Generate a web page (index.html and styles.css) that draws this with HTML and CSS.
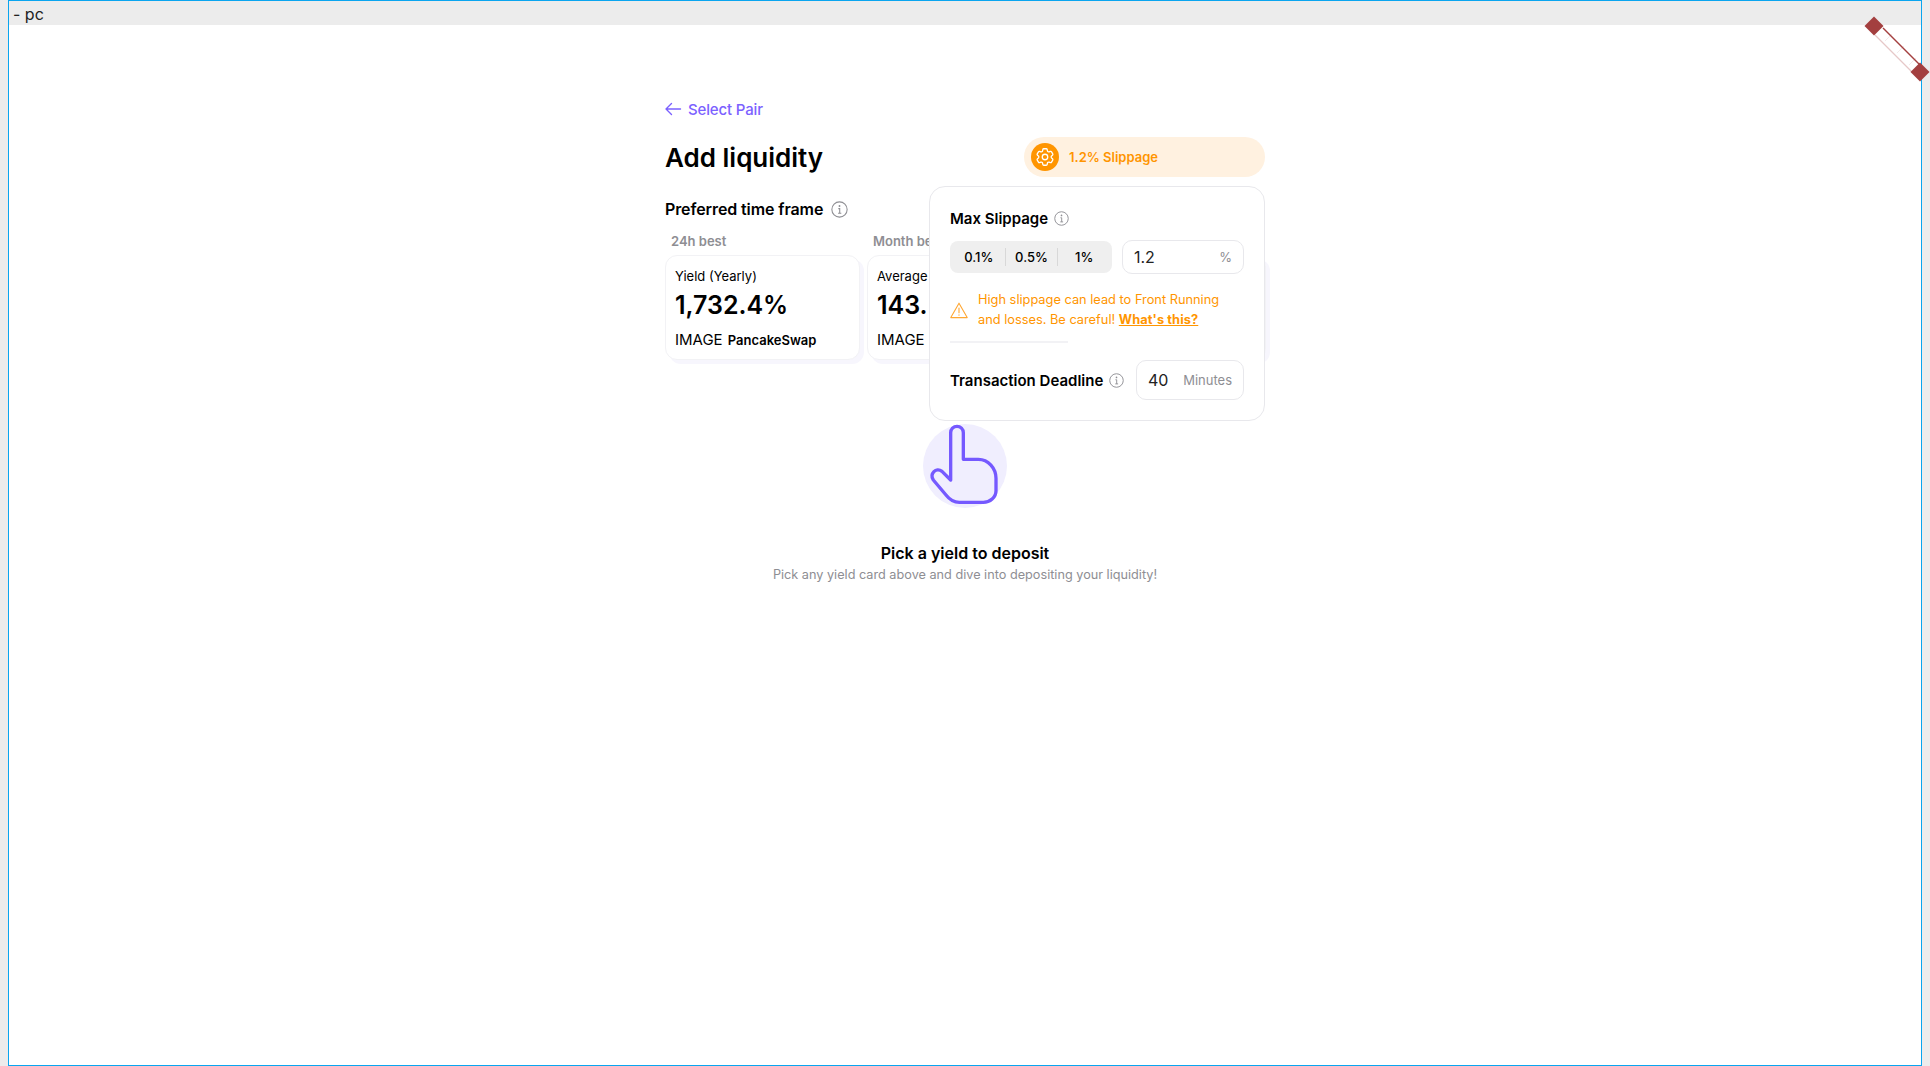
FILE: index.html
```html
<!DOCTYPE html>
<html lang="en">
<head>
    <meta charset="UTF-8">
    <title>Add liquidity - pc</title>
    <link rel="stylesheet" href="styles.css">
</head>
<body>
    <div class="frame">
        <div class="frame-title">- pc</div>

        <!-- resize handle on the frame corner -->
        <svg class="handle" width="66" height="68" viewBox="0 0 66 68">
            <path d="M19 12 L56 49 L48 56 L11 19 Z" fill="#fff"/>
            <path d="M21 25 L28 18 M33 37 L40 30 M45 49 L52 42" stroke="#f4eaea" stroke-width="1"/>
            <path d="M19 12 L56 49" stroke="#a33f3f" stroke-width="1.4"/>
            <path d="M11 19 L48 56" stroke="#e6c8c8" stroke-width="1.2"/>
            <path d="M10 0.5 L19.5 10 L10 19.5 L0.5 10 Z" fill="#a33f3f"/>
            <path d="M56 46.5 L65.5 56 L56 65.5 L46.5 56 Z" fill="#a33f3f"/>
        </svg>

        <main class="page">
            <a class="back" href="#">
                <svg width="17" height="14" viewBox="0 0 17 14" fill="none" stroke="#7b61ff" stroke-width="1.4" stroke-linecap="round" stroke-linejoin="round">
                    <path d="M15.5 7 H1 M6.5 1.5 L1 7 L6.5 12.5"/>
                </svg>
                Select Pair
            </a>

            <div class="head">
                <h1>Add liquidity</h1>
                <button class="slippage-pill">
                    <span class="gear">
                        <svg width="22" height="22" viewBox="0 0 24 24" fill="none" stroke="#fff" stroke-width="1.4" stroke-linecap="round" stroke-linejoin="round">
                            <path d="M9.594 3.94c.09-.542.56-.94 1.11-.94h2.593c.55 0 1.02.398 1.11.94l.213 1.281c.063.374.313.686.645.87.074.04.147.083.22.127.325.196.72.257 1.075.124l1.217-.456a1.125 1.125 0 0 1 1.37.49l1.296 2.247a1.125 1.125 0 0 1-.26 1.431l-1.003.827c-.293.241-.438.613-.43.992a7.723 7.723 0 0 1 0 .255c-.008.378.137.75.43.991l1.004.827c.424.35.534.955.26 1.43l-1.298 2.247a1.125 1.125 0 0 1-1.369.491l-1.217-.456c-.355-.133-.75-.072-1.076.124a6.47 6.47 0 0 1-.22.128c-.331.183-.581.495-.644.869l-.213 1.281c-.09.543-.56.94-1.11.94h-2.594c-.55 0-1.019-.398-1.11-.94l-.213-1.281c-.062-.374-.312-.686-.644-.87a6.52 6.52 0 0 1-.22-.127c-.325-.196-.72-.257-1.076-.124l-1.217.456a1.125 1.125 0 0 1-1.369-.49l-1.297-2.247a1.125 1.125 0 0 1 .26-1.431l1.004-.827c.292-.24.437-.613.43-.991a6.932 6.932 0 0 1 0-.255c.007-.38-.138-.751-.43-.992l-1.004-.827a1.125 1.125 0 0 1-.26-1.43l1.297-2.247a1.125 1.125 0 0 1 1.37-.491l1.216.456c.356.133.751.072 1.076-.124.072-.044.146-.086.22-.128.332-.183.582-.495.644-.869l.214-1.28Z"/>
                            <circle cx="12" cy="12" r="3"/>
                        </svg>
                    </span>
                    1.2% Slippage
                </button>
            </div>

            <div class="frame-label">
                Preferred time frame
                <svg class="info info-big" viewBox="0 0 16 16"><circle cx="8" cy="8" r="7.2"/><path d="M6.9 7.2 H8.2 V11.6 M6.7 11.6 H9.7"/><circle class="dot" cx="8" cy="4.7" r="0.9"/></svg>
            </div>

            <div class="cards">
                <div class="card-col">
                    <div class="card-tag">24h best</div>
                    <div class="card">
                        <div class="card-sub">Yield (Yearly)</div>
                        <div class="card-num">1,732.4%</div>
                        <div class="card-src">IMAGE <b>PancakeSwap</b></div>
                    </div>
                </div>
                <div class="card-col">
                    <div class="card-tag">Month be</div>
                    <div class="card">
                        <div class="card-sub">Average</div>
                        <div class="card-num">143.</div>
                        <div class="card-src">IMAGE</div>
                    </div>
                </div>
                <div class="card-col">
                    <div class="card-tag"></div>
                    <div class="card"></div>
                </div>
            </div>

            <div class="pick">
                <svg class="hand" width="84" height="84" viewBox="9 12 252 252">
                    <circle cx="135" cy="138" r="126" fill="#f0eefe"/>
                    <path d="M92 180 V38 a19 19 0 0 1 38 0 V118 H175 C205 118 228 145 228 175 V212 C228 232 210 247 190 247 H118 C100 247 88 238 78 225 L40 180 C28 162 48 140 66 154 Z" fill="none" stroke="#7559ff" stroke-width="10" stroke-linejoin="round"/>
                </svg>
                <h2>Pick a yield to deposit</h2>
                <p>Pick any yield card above and dive into depositing your liquidity!</p>
            </div>

            <!-- slippage popover, open over the cards -->
            <div class="popover">
                <div class="pop-title">
                    Max Slippage
                    <svg class="info" viewBox="0 0 16 16"><circle cx="8" cy="8" r="7.2"/><path d="M6.9 7.2 H8.2 V11.6 M6.7 11.6 H9.7"/><circle class="dot" cx="8" cy="4.7" r="0.9"/></svg>
                </div>
                <div class="slip-row">
                    <div class="segments">
                        <span>0.1%</span>
                        <span>0.5%</span>
                        <span>1%</span>
                    </div>
                    <div class="field slip-field">
                        <span class="field-val">1.2</span>
                        <span class="field-unit">%</span>
                    </div>
                </div>
                <div class="warning">
                    <svg width="18" height="17" viewBox="0 0 18 17" fill="none" stroke="#ffa733" stroke-width="1.1" stroke-linejoin="round" stroke-linecap="round">
                        <path d="M9 1.2 L17.2 15.6 H0.8 Z"/>
                        <path d="M9 6 V10.8 M9 12.8 V13.2"/>
                    </svg>
                    <p>High slippage can lead to Front Running and losses. Be careful! <a href="#">What's this?</a></p>
                </div>
                <div class="pop-line"></div>
                <div class="deadline">
                    <div class="pop-title">
                        Transaction Deadline
                        <svg class="info" viewBox="0 0 16 16"><circle cx="8" cy="8" r="7.2"/><path d="M6.9 7.2 H8.2 V11.6 M6.7 11.6 H9.7"/><circle class="dot" cx="8" cy="4.7" r="0.9"/></svg>
                    </div>
                    <div class="field deadline-field">
                        <span class="field-val">40</span>
                        <span class="field-unit">Minutes</span>
                    </div>
                </div>
            </div>
        </main>
    </div>
</body>
</html>
```

FILE: styles.css
```css
*{
    box-sizing: border-box;
}
html,body{
    height: 100%;
    margin: 0;
    overflow: hidden;
}
body{
    padding: 0 8px;
    background-color: #ececec;
    font-family: "Inter", "Liberation Sans", sans-serif;
    color: #000;
}
.frame{
    position: relative;
    height: 1066px;
    border: 1px solid #0aa5ef;
    background-color: #fff;
}
.frame-title{
    height: 24px;
    padding-left: 4px;
    background-color: #ececec;
    font-size: 16px;
    line-height: 26px;
    color: #222;
}
.handle{
    position: absolute;
    top: 15px;
    right: -9px;
}

.page{
    position: relative;
    width: 600px;
    margin: 0 auto;
    padding-top: 74px;
}
.back{
    display: flex;
    align-items: center;
    gap: 6px;
    height: 20px;
    font-size: 15px;
    font-weight: 500;
    letter-spacing: -0.15px;
    color: #7b61ff;
    text-decoration: none;
}
.head{
    display: flex;
    align-items: center;
    justify-content: space-between;
    height: 40px;
    margin-top: 18px;
}
h1{
    margin: 0;
    font-size: 26px;
    font-weight: 600;
}
.slippage-pill{
    display: flex;
    align-items: center;
    gap: 10px;
    width: 241px;
    height: 40px;
    padding: 0 7px;
    border: none;
    border-radius: 20px;
    background-color: #fff1e0;
    font-family: inherit;
    font-size: 13px;
    font-weight: 600;
    color: #ff9500;
}
.gear{
    display: flex;
    align-items: center;
    justify-content: center;
    width: 28px;
    height: 28px;
    border-radius: 50%;
    background-color: #ff9500;
}

.frame-label{
    display: flex;
    align-items: center;
    gap: 8px;
    height: 20px;
    margin-top: 22px;
    font-size: 16px;
    font-weight: 600;
    letter-spacing: -0.1px;
}
.info{
    width: 15px;
    height: 15px;
    fill: none;
    stroke: #8e8e93;
    stroke-width: 1;
}
.info-big{
    width: 17px;
    height: 17px;
}
.info .dot{
    fill: #8e8e93;
    stroke: none;
}

.cards{
    display: grid;
    grid-template-columns: 195px 195px 197px;
    gap: 7px;
    margin-top: 14px;
}
.card-tag{
    height: 16px;
    padding-left: 6px;
    font-size: 13px;
    font-weight: 600;
    line-height: 16px;
    color: #8e8e93;
}
.card{
    height: 105px;
    margin-top: 6px;
    padding: 12px 9px 0;
    border: 1px solid #f2f2f5;
    border-radius: 12px;
    background-color: #fff;
    box-shadow: 4px 4px 0 #f7f6fd;
}
.card-sub{
    font-size: 13px;
    line-height: 16px;
}
.card-num{
    margin-top: 5px;
    font-size: 25px;
    font-weight: 600;
    line-height: 32px;
}
.card-src{
    margin-top: 9px;
    font-size: 15px;
    line-height: 20px;
}
.card-src b{
    margin-left: 1px;
    font-size: 13px;
    font-weight: 600;
}

.pick{
    margin-top: 64px;
    text-align: center;
}
.hand{
    display: block;
    margin: 0 auto;
}
h2{
    margin: 35px 0 0;
    font-size: 16px;
    font-weight: 600;
    line-height: 20px;
}
.pick p{
    margin: 3px 0 0;
    font-size: 12.7px;
    line-height: 18px;
    color: #8e8e93;
}

.popover{
    position: absolute;
    top: 161px;
    right: 0;
    width: 336px;
    height: 235px;
    padding: 21px 20px 0;
    border: 1px solid #e8e8ec;
    border-radius: 16px;
    background-color: #fff;
}
.pop-title{
    display: flex;
    align-items: center;
    gap: 6px;
    height: 20px;
    font-size: 15px;
    font-weight: 600;
    white-space: nowrap;
}
.slip-row{
    display: flex;
    align-items: center;
    gap: 10px;
    margin-top: 12px;
}
.segments{
    display: flex;
    align-items: center;
    width: 162px;
    height: 32px;
    padding: 0 2px 0 3px;
    border-radius: 8px;
    background-color: #efefef;
    font-size: 13px;
    font-weight: 500;
}
.segments span{
    flex: 1;
    height: 18px;
    border-left: 1px solid #d8d8d8;
    line-height: 19px;
    text-align: center;
}
.segments span:first-child{
    border-left: none;
}
.field{
    display: flex;
    align-items: center;
    justify-content: space-between;
    border: 1px solid #e8e8ec;
    border-radius: 10px;
    background-color: #fff;
}
.slip-field{
    width: 122px;
    height: 34px;
    padding: 0 11px;
}
.deadline-field{
    width: 108px;
    height: 40px;
    padding: 0 11px;
}
.field-val{
    font-size: 16px;
    color: #222;
}
.field-unit{
    font-size: 13px;
    color: #8e8e93;
}
.warning{
    display: flex;
    align-items: center;
    gap: 10px;
    margin-top: 16px;
}
.warning svg{
    flex-shrink: 0;
}
.warning p{
    margin: 0;
    font-size: 12.8px;
    line-height: 20px;
    color: #ff9500;
}
.warning a{
    font-weight: 700;
    letter-spacing: 0.1px;
    color: #ff9500;
}
.pop-line{
    width: 118px;
    height: 2px;
    margin-top: 11px;
    background-color: #f2f2f5;
}
.deadline{
    display: flex;
    align-items: center;
    justify-content: space-between;
    margin-top: 17px;
}
```
